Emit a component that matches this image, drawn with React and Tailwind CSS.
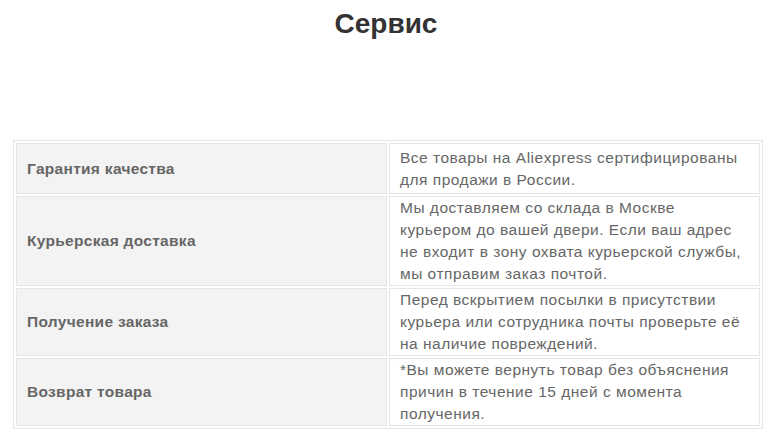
import React from 'react';

const rows = [
  {
    label: 'Гарантия качества',
    text: ['Все товары на Aliexpress сертифицированы', 'для продажи в России.'],
  },
  {
    label: 'Курьерская доставка',
    text: [
      'Мы доставляем со склада в Москве',
      'курьером до вашей двери. Если ваш адрес',
      'не входит в зону охвата курьерской службы,',
      'мы отправим заказ почтой.',
    ],
  },
  {
    label: 'Получение заказа',
    text: [
      'Перед вскрытием посылки в присутствии',
      'курьера или сотрудника почты проверьте её',
      'на наличие повреждений.',
    ],
  },
  {
    label: 'Возврат товара',
    text: [
      '*Вы можете вернуть товар без объяснения',
      'причин в течение 15 дней с момента',
      'получения.',
    ],
  },
];

export default function App() {
  return (
    <div className="w-[772px] h-[434px] bg-white font-['Liberation_Sans',Arial,sans-serif] overflow-hidden">
      <h1 className="text-center text-[28px] leading-[34px] pt-[7px] font-bold text-[#333]">Сервис</h1>
      <div className="pt-[99px] pl-[13px]">
        <table className="w-[750px] table-fixed border-separate border-spacing-[2px] border border-[#e6e6e6]">
          <tbody>
            {rows.map((row, i) => (
              <tr key={row.label}>
                <td className={`border border-[#e6e6e6] bg-[#f3f3f3] px-[10px] align-middle text-[15.5px] tracking-[0.3px] leading-[22px] font-bold text-[#666] ${i === 0 ? 'h-[51px]' : ''}`}>
                  {row.label}
                </td>
                <td className="border border-[#e6e6e6] bg-white px-[10px] py-0 align-middle text-[15.5px] tracking-[0.5px] leading-[22px] text-[#666]">
                  {row.text.map((line) => (
                    <div key={line} className="whitespace-nowrap">{line}</div>
                  ))}
                </td>
              </tr>
            ))}
          </tbody>
        </table>
      </div>
    </div>
  );
}
